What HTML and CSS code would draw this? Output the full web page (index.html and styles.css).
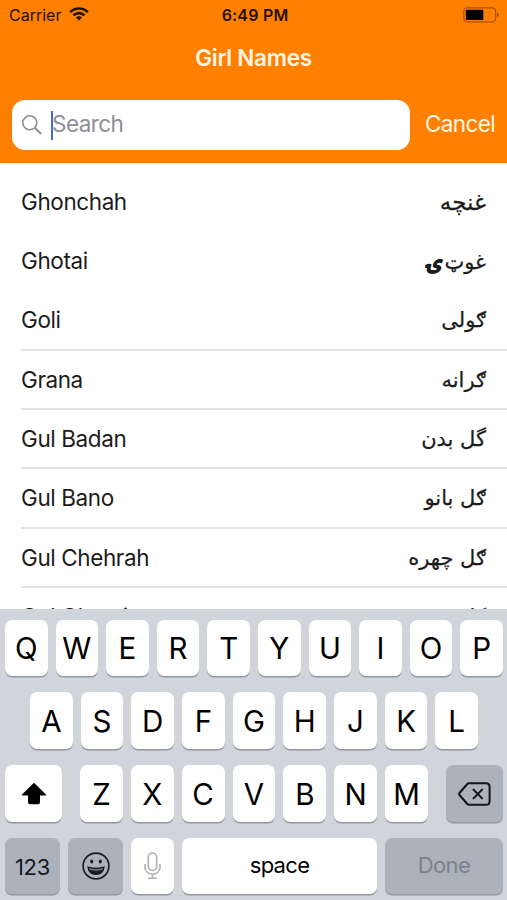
FILE: index.html
```html
<!DOCTYPE html>
<html lang="en">
<head>
<meta charset="utf-8">
<title>Girl Names</title>
<link rel="stylesheet" href="styles.css">
</head>
<body>
<div class="screen">
  <header class="header">
    <div class="status">
      <div class="carrier"><span>Carrier</span>
        <svg class="wifi" width="20" height="14" viewBox="0 0 20 14" fill="none" stroke="#241200" stroke-width="2.7"><path d="M1.2 5.1a12.5 12.5 0 0 1 17.6 0M4.400 8.400a8 8 0 0 1 11.200 0"/><path d="M10 13.500 6.900 10.500a4.400 4.400 0 0 1 6.200 0z" fill="#241200" stroke="none"/></svg>
      </div>
      <div class="time">6:49 PM</div>
      <svg class="battery" width="37" height="16" viewBox="0 0 37 16"><rect x=".8" y=".8" width="31.8" height="14" rx="3" fill="none" stroke="#a65300" stroke-width="1.2"/><rect x="2.800" y="2.700" width="17.500" height="10.200" rx="1" fill="#000"/><path d="M34 5.200c2.600.8 2.600 4.400 0 5.200z" fill="#a65300"/></svg>
    </div>
    <h1 class="title">Girl Names</h1>
    <div class="search-row">
      <div class="search">
        <svg class="lens" width="20" height="20" viewBox="0 0 20 20" fill="none" stroke="#8e8e93" stroke-width="1.6"><circle cx="7.8" cy="7.8" r="7"/><path d="m12.800 12.800 6.400 6.200" stroke-width="2"/></svg>
        <span class="caret"></span><span class="placeholder">Search</span>
      </div>
      <span class="cancel">Cancel</span>
    </div>
  </header>
  <main class="list">
    <div class="row plain"><span>Ghonchah</span><span class="native wide" lang="ps">غنچه</span></div>
    <div class="row plain"><span>Ghotai</span><span class="native" lang="ps">غوټ<span class="yeh">ۍ</span></span></div>
    <div class="row"><span>Goli</span><span class="native" lang="ps">ګولی</span></div>
    <div class="row"><span>Grana</span><span class="native" lang="ps">ګرانه</span></div>
    <div class="row"><span>Gul Badan</span><span class="native" lang="ps">گل بدن</span></div>
    <div class="row"><span>Gul Bano</span><span class="native" lang="ps">ګل بانو</span></div>
    <div class="row"><span>Gul Chehrah</span><span class="native" lang="ps">ګل چهره</span></div>
    <div class="row"><span>Gul Ghutai</span><span class="native" lang="ps">ګل</span></div>
  </main>
  <div class="keyboard">
    <div class="keys"><b>Q</b><b>W</b><b>E</b><b>R</b><b>T</b><b>Y</b><b>U</b><b>I</b><b>O</b><b>P</b></div>
    <div class="keys middle"><b>A</b><b>S</b><b>D</b><b>F</b><b>G</b><b>H</b><b>J</b><b>K</b><b>L</b></div>
    <div class="keys">
      <b class="shift"><svg width="26" height="23" viewBox="0 0 26 23"><path d="M13 .8 25 12.600q.6 1-.5 1H19v6.600q0 2-2 2H9q-2 0-2-2v-6.600H1.500q-1.100 0-.5-1z"/></svg></b>
      <b>Z</b><b>X</b><b>C</b><b>V</b><b>B</b><b>N</b><b>M</b>
      <b class="delete gray"><svg width="33" height="24" viewBox="0 0 33 24" fill="none" stroke="#10151d" stroke-width="2" stroke-linejoin="round" stroke-linecap="round"><path d="M11 1.200h17q3.600 0 3.600 3.600v14.400q0 3.600-3.600 3.600H11q-1 0-1.700-.8L1.500 13q-.8-1 0-2L9.300 2q.7-.8 1.700-.8z"/><path d="m15.500 7.600 8.600 8.800m0-8.800-8.600 8.800"/></svg></b>
    </div>
    <div class="keys">
      <b class="numbers gray">123</b>
      <b class="emoji gray"><svg width="28" height="28" viewBox="0 0 28 28"><circle cx="14" cy="14" r="12.900" fill="none" stroke="#141a22" stroke-width="1.600"/><ellipse cx="9.700" cy="9.500" rx="1.500" ry="2" fill="#141a22"/><ellipse cx="18.300" cy="9.500" rx="1.500" ry="2" fill="#141a22"/><path d="M5.300 14.300q8.700 2.800 17.400 0-.6 8.700-8.700 8.700t-8.700-8.700z" fill="#141a22"/><path d="M7 16q7 2.200 14 0l-.7 1.900q-6.300 1.500-12.600 0z" fill="#6d747e"/></svg></b>
      <b class="mic"><svg width="17" height="28" viewBox="0 0 17 28" fill="none" stroke="#b0b0b3" stroke-width="1.600"><rect x="4.300" y="1" width="8.400" height="17.500" rx="4.200"/><path d="M1 12v3.500a7.500 6.700 0 0 0 15 0V12M8.500 22.200v4M4 26.300h9"/></svg></b>
      <b class="space">space</b>
      <b class="done gray">Done</b>
    </div>
  </div>
</div>
</body>
</html>
```
FILE: styles.css
```css
* { box-sizing: border-box; }
body { margin: 0; font-family: Inter, "Liberation Sans", sans-serif; background: #fff; color: #1c1c1c; }
.screen { width: 507px; height: 900px; overflow: hidden; display: flex; flex-direction: column; }
.header { height: 163px; flex: none; background: #ff8000; }
.status { height: 30px; padding: 0 8px 0 9px; display: grid; grid-template-columns: 1fr auto 1fr; align-items: center; font-size: 16px; color: #241200; }
.carrier { display: flex; align-items: center; gap: 8px; letter-spacing: 0; }
.wifi { margin-top: -2px; }
.time { font-weight: 600; letter-spacing: .2px; padding-left: 2px; }
.battery { justify-self: end; margin-right: -1px; }
.title { margin: 0; height: 56px; font-size: 22.500px; line-height: 56px; font-weight: 600; letter-spacing: -.3px; text-align: center; color: #fff5e4; }
.search-row { display: flex; align-items: center; margin-top: 14px; padding: 0 12px; height: 50px; }
.search { width: 398px; flex: none; height: 50px; border-radius: 13px; background: #fff; display: flex; align-items: center; padding-left: 10px; }
.caret { width: 2px; height: 29px; background: #4169df; margin-left: 9px; }
.placeholder { font-size: 22.500px; color: #8e8e93; letter-spacing: -.55px; margin-left: -1px; padding-bottom: 3px; }
.cancel { margin-left: 15px; font-size: 22.500px; letter-spacing: -.6px; color: #fff5e4; white-space: nowrap; padding-bottom: 3px; }
.list { height: 446px; padding-top: 9.500px; overflow: hidden; flex: none; }
.row { height: 59.350px; margin-left: 21px; padding: 0 21px 0 0; display: flex; justify-content: space-between; align-items: center; border-bottom: 2px solid #e3e3e5; font-size: 22.500px; letter-spacing: -.4px; }
.plain { border-color: transparent; }
.row:last-child { padding-bottom: .5px; }
.native { direction: rtl; font-family: "DejaVu Sans", sans-serif; font-size: 21px; letter-spacing: 0; padding-top: 1px; -webkit-text-stroke: .25px #1c1c1c; }
.wide { font-size: 23px; }
.yeh { display: inline-block; font-weight: bold; font-size: 24px; line-height: 1; margin-right: 1px; transform: skewX(-12deg); }
.keyboard { flex: none; height: 291px; padding: 10.500px 4px 0 5px; background: #d1d4da; display: flex; flex-direction: column; gap: 16px; }
.keys { display: flex; gap: 8px; height: 56.700px; }
.keys b { flex: 1 1 0; display: flex; align-items: center; justify-content: center; background: #fefefe; border-radius: 7px; box-shadow: 0 1.500px 0 #94979d; font-size: 29.500px; font-weight: 400; color: #000; padding-top: 1px; }
.keys.middle { padding: 0 25px; }
.keys .shift, .keys .delete { flex: 0 0 57px; }
.keys .shift { margin-right: 10px; }
.keys .delete { margin-left: 10px; }
.keys .gray { background: #abb2bc; }
.keys .numbers, .keys .emoji { flex: 0 0 55px; font-size: 22px; color: #141a22; }
.keys .numbers { letter-spacing: -.3px; padding-top: 2px; }
.keys .mic { flex: 0 0 43px; }
.keys .space { flex: 1; font-size: 22px; letter-spacing: -.7px; padding-bottom: 2px; }
.keys .done { flex: 0 0 118px; font-size: 22px; letter-spacing: -.6px; color: #7b828b; padding-bottom: 2px; }
```
